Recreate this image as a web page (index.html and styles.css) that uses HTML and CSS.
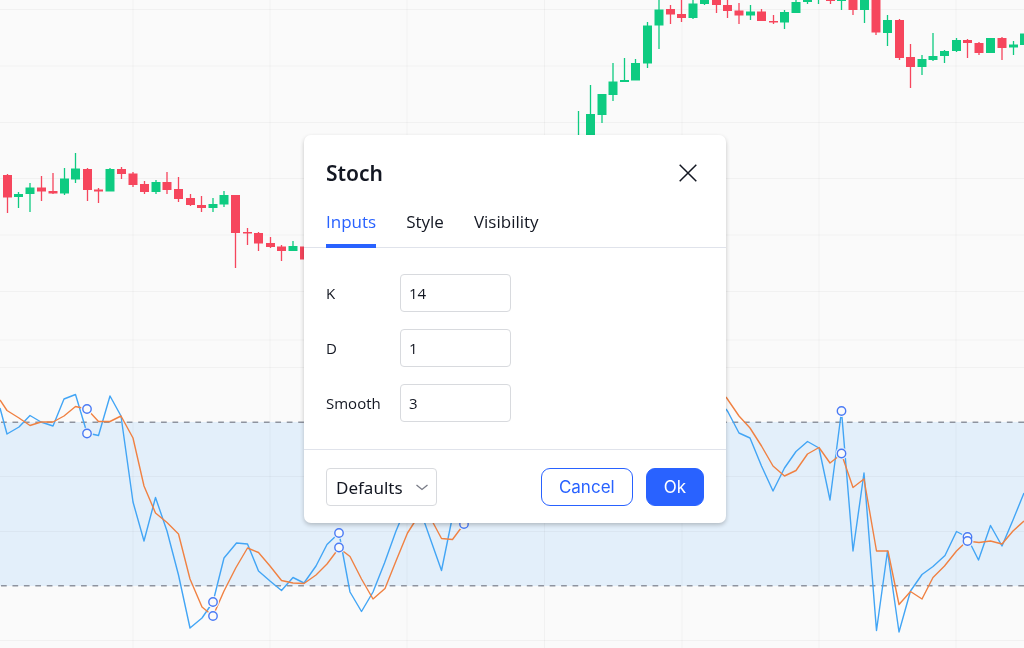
FILE: index.html
```html
<!DOCTYPE html>
<html lang="en">
<head>
<meta charset="utf-8">
<meta name="viewport" content="width=device-width, initial-scale=1">
<title>Stoch settings</title>
<link rel="stylesheet" href="styles.css">
</head>
<body>
<svg class="chart" viewBox="0 0 1024 648" preserveAspectRatio="xMidYMid slice" aria-hidden="true">
  <rect class="band" x="0" y="422" width="1024" height="164"/>
  <path class="grid" d="M133 0V648M270 0V648M407 0V648M544.500 0V648M682 0V648M819 0V648M956 0V648M0 9.500H1024M0 66H1024M0 122.500H1024M0 178.500H1024M0 235H1024M0 291.500H1024M0 340H1024M0 367.500H1024M0 476.500H1024M0 531.500H1024M0 640.500H1024"/>
  <path class="level" d="M-10.400 422.300H1024M-10.400 585.700H1024"/>

  <path class="wick up" d="M18.500 192V208M30 183V212M64.500 168V195M75.500 153V183M110 168V191M156 180V194M213 198V212M224 191V207M293 241V251M578.500 111V140M590.500 85V140M602 94V123M613 63V101M624.500 58V82M635.500 59V80M647.500 22V68M659 0V49M693 0V19M704.500 0V5M750.500 5V20M784.500 10V29M796 0V13M807.500 0V4M818.500 0V4M841.500 0V10M864.500 0V23M887.500 15V46M922 55V75M933 33V61M944.500 50V63M956.500 38V52M1013.500 41V55"/>
  <path class="wick down" d="M7.500 174V213M41.500 176V201M53 173V194M87.500 168V201M98.500 188V203M121.500 167V179M133 172V187M144.500 181V194M167 172V194M178.500 177V202M190.500 194V206M201.500 196V212M235.500 195V268M247.500 228V245M258.500 232V251M270.500 237V248M281.500 245V261M670.500 5V24M681.500 0V22M716.500 0V13M727.500 0V18M739 3V24M761.500 9V21M773.500 15V24M830.500 0V4M853 0V15M876 0V35M899.500 19V60M910.500 44V88M967.500 39V58M979 42V55M1002 37V60"/>
  <path class="candle up" d="M18.500 194V197M30 187.500V194M64.500 178.500V193.500M75.500 168.500V179.500M110 169V191.500M156 182V192M213 204V208M224 195V204.500M293 246V251M590.500 114V140M602 94V115M613 81.500V95M624.500 80V82M635.500 63V80.500M647.500 25.500V63.500M659 9.500V25.500M693 3.500V18M704.500 0V4M750.500 11.500V15.500M784.500 12V22.500M796 2V13M807.500 0V2M841.500 0V1M864.500 0V10M887.500 20V33M922 59V67M933 56V60M944.500 51V56M956.500 40V51M990.500 38V53M1013.500 44.500V47.500M1024.500 33.500V45"/>
  <path class="candle down" d="M7.500 175V197.500M41.500 187.500V191.500M53 191V193.500M87.500 169V190M98.500 189.500V191.500M121.500 169V174M133 173.500V185M144.500 184V192M167 182V190M178.500 189V199M190.500 198V205M201.500 205V208M235.500 195V233M247.500 232V233.500M258.500 233V243.500M270.500 243V247M281.500 246.500V251M304.500 246.500V259.500M670.500 9V14.500M681.500 14V18M716.500 0V5M727.500 5V11M739 10.500V15.500M761.500 11.500V21M773.500 21V22.500M830.500 0V1M853 0V10M876 0V32.500M899.500 20V58M910.500 57V67M967.500 40V43M979 43V53M1002 38V48"/>

  <polyline class="line blue" points="0,408 7,434 19,427 30,415.5 41,422 53,426 64,399 75.5,394.5 87,433 98.5,435.500 110,396 121,416 133,502 144,541 155.500,497.500 167,531 178.500,575 190,628 202,618 213,602 224,558 236.500,543 247.500,544 258.500,571 270,581 281.500,590.500 293,577.500 304,583 316,566 327,544.500 339,533 350,592 361.500,611.500 373,592 384.500,563 396,531 407,505 418,504 430,538 441.500,570.500 452,519 464,500"/>
  <polyline class="line orange" points="0,400 7,410.5 19,418 30,425.5 41,422 53,422 64,416 75.5,406.5 87,409 98.5,421.5 110,421.5 121,416 133,438 144,486 155.5,513 167,522.5 178.5,534 190,579 202,607 213,616 224,591 236,567.5 247.5,548 258.5,552.5 270,566 281.5,580.5 293,583 304,583.5 316,575 327,564 339,548 350,556.5 361.5,579 373,599 385,588.5 396,561 407.5,533 419,515 430,517 441.5,538.5 452.5,539.5 464,524"/>
  <polyline class="line blue" points="726,409 728,412 739,433 750,438 761.5,466 773,491 784.5,468 796,451.5 807.5,441.5 819,448 830,500 841.5,411 853,551 864,473 876.5,630.5 887.5,551 899,632 910.5,591 922,574.5 933,566.5 945,555.5 956.5,531.5 967,537 978.5,560 990.5,525.5 1002,546 1013,520 1024,493"/>
  <polyline class="line orange" points="726,397 739,416 750,428 761.5,446 773,466 784.5,476 796,470.5 807.5,454 819,447.5 830,463 841.5,454 853,487.5 864,479 876.5,551 888,551 899,604.5 910.5,591.5 922,599 933,577.5 944.5,566 956.5,551 967,541 979,542.5 990.5,541 1002,544 1013,531 1024,521"/>

  <g class="halo"><circle cx="87" cy="409" r="6"/><circle cx="213" cy="602" r="6"/><circle cx="213" cy="616" r="6"/><circle cx="841.500" cy="411" r="6"/></g>
  <g class="halo tinted"><circle cx="87" cy="433.500" r="6"/><circle cx="339" cy="533" r="6"/><circle cx="339" cy="547.500" r="6"/><circle cx="464" cy="524" r="6"/><circle cx="841.500" cy="453.500" r="6"/><circle cx="967.500" cy="537" r="6"/><circle cx="967.500" cy="541" r="6"/></g>
  <g class="point"><circle cx="87" cy="409" r="4.200"/><circle cx="87" cy="433.500" r="4.200"/><circle cx="213" cy="602" r="4.200"/><circle cx="213" cy="616" r="4.200"/><circle cx="339" cy="533" r="4.200"/><circle cx="339" cy="547.500" r="4.200"/><circle cx="464" cy="524" r="4.200"/><circle cx="841.500" cy="411" r="4.200"/><circle cx="841.500" cy="453.500" r="4.200"/><circle cx="967.500" cy="537" r="4.200"/><circle cx="967.500" cy="541" r="4.200"/></g>
</svg>

<main class="stage">
  <form class="dialog" role="dialog" aria-labelledby="dialog-title">
    <header class="dialog-header">
      <div class="title-row">
        <h1 class="title" id="dialog-title">Stoch</h1>
        <button class="close" type="button" aria-label="Close">
          <svg width="18" height="18" viewBox="0 0 18 18" aria-hidden="true"><path d="M.7.700 17.300 17.300M17.300.700.700 17.300" fill="none" stroke="currentColor" stroke-width="1.500"/></svg>
        </button>
      </div>
      <div class="tabs" role="tablist">
        <button class="tab active" type="button" role="tab" aria-selected="true">Inputs</button>
        <button class="tab" type="button" role="tab" aria-selected="false">Style</button>
        <button class="tab" type="button" role="tab" aria-selected="false">Visibility</button>
      </div>
    </header>
    <div class="fields">
      <label for="k">K</label><input class="field" id="k" type="text" inputmode="numeric" value="14">
      <label for="d">D</label><input class="field" id="d" type="text" inputmode="numeric" value="1">
      <label for="smooth">Smooth</label><input class="field" id="smooth" type="text" inputmode="numeric" value="3">
    </div>
    <footer class="dialog-footer">
      <div class="select-wrap">
        <select class="select" aria-label="Defaults"><option>Defaults</option></select>
        <svg class="chevron" width="12" height="7" viewBox="0 0 12 7" aria-hidden="true"><path d="M.5 1 6 5.500 11.500 1" fill="none" stroke="currentColor" stroke-width="1.300"/></svg>
      </div>
      <div class="actions">
        <button class="button" type="button">Cancel</button>
        <button class="button primary" type="submit">Ok</button>
      </div>
    </footer>
  </form>
</main>
</body>
</html>
```

FILE: styles.css
```css
* { box-sizing: border-box; }

body {
  margin: 0;
  background: #fafafa;
  color: #131722;
  font-family: "Noto Sans", "Open Sans", sans-serif;
}

button, input, select { font: inherit; color: inherit; }

/* Chart backdrop */
.chart {
  position: fixed;
  inset: 0;
  width: 100%;
  height: 100%;
}
.band { fill: #e3effa; }
.grid { fill: none; stroke: #2a2e39; stroke-opacity: 0.045; }
.level { fill: none; stroke: #8e939e; stroke-width: 1.5; stroke-dasharray: 5.7 5.73; }
.wick { fill: none; stroke-width: 1.3; }
.candle { fill: none; stroke-width: 9; }
.up { stroke: #0ecb81; }
.down { stroke: #f6465d; }
.line { fill: none; stroke-width: 1.4; stroke-linejoin: round; }
.blue { stroke: #42a5f5; }
.orange { stroke: #f08142; }
.halo { fill: #fafafa; }
.halo.tinted { fill: #e3effa; }
.point { fill: #fafafa; stroke: #4a7af5; stroke-width: 1.4; }

/* Settings dialog */
.stage {
  position: relative;
  display: grid;
  place-items: center;
  min-height: 100vh;
  padding: 10px 0 0 6px;
}
.dialog {
  width: 422px;
  max-width: 100%;
  background: #fff;
  border-radius: 7px;
  box-shadow: 0 2px 4px rgba(0, 0, 0, 0.22);
}
.dialog-header {
  padding: 18px 22px 0;
  box-shadow: inset 0 -1px #e0e3eb;
}
.title-row {
  display: flex;
  align-items: center;
  justify-content: space-between;
  height: 40px;
}
.title { margin: 0; font-size: 21px; line-height: 28px; font-weight: 600; }
.close {
  display: grid;
  place-items: center;
  width: 32px;
  height: 32px;
  padding: 0;
  border: 0;
  background: none;
}
.tabs { display: flex; gap: 30px; margin-top: 16px; }
.tab {
  padding: 0 0 9px;
  border: 0;
  border-bottom: 4px solid transparent;
  background: none;
  font-family: "Open Sans", "Noto Sans", sans-serif;
  font-size: 17px;
  line-height: 26px;
}
.tab.active { color: #2962ff; border-color: #2962ff; }

.fields {
  display: grid;
  grid-template-columns: 74px 111px;
  align-items: center;
  row-gap: 17px;
  padding: 26px 22px 27px;
  font-family: "Open Sans", "Noto Sans", sans-serif;
  font-size: 15px;
}
.field {
  width: 100%;
  height: 38px;
  padding: 0 8px;
  border: 1px solid #d8dade;
  border-radius: 4px;
  background: #fff;
}

.dialog-footer {
  display: flex;
  align-items: center;
  justify-content: space-between;
  padding: 18px 22px 17px;
  border-top: 1px solid #e0e3eb;
}
.select-wrap { display: grid; align-items: center; width: 111px; }
.select, .chevron { grid-area: 1 / 1; }
.select {
  appearance: none;
  width: 100%;
  height: 38px;
  padding: 0 28px 0 9px;
  border: 1px solid #d8dade;
  border-radius: 4px;
  background: #fff;
  font-size: 17px;
}
.chevron { justify-self: end; margin-right: 9px; color: #787b86; pointer-events: none; }
.actions { display: flex; gap: 13px; }
.button {
  height: 38px;
  padding: 0 17px;
  border: 1px solid #2962ff;
  border-radius: 9px;
  background: #fff;
  color: #2962ff;
  font-family: Inter, "Liberation Sans", sans-serif;
  font-size: 17px;
}
.button.primary { background: #2962ff; color: #fff; }
```
